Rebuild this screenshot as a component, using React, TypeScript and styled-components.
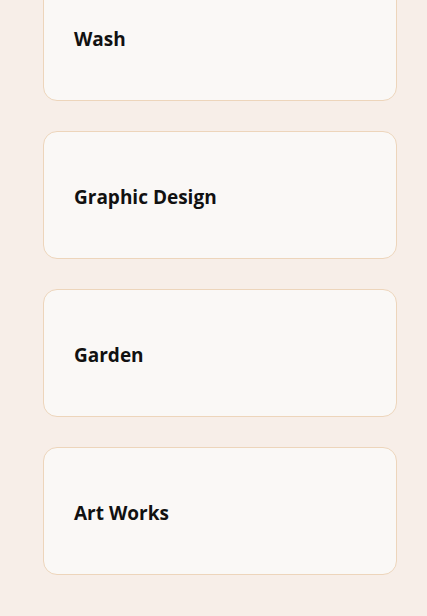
import styled, { createGlobalStyle } from 'styled-components';

const GlobalStyle = createGlobalStyle`
  html, body {
    margin: 0;
    padding: 0;
    background: #f7eee8;
    font-family: "Open Sans", "Noto Sans", sans-serif;
  }
`;

const Page = styled.div`
  height: 616px;
  overflow: hidden;
`;

const List = styled.ul`
  list-style: none;
  margin: -27px 0 0 43px;
  padding: 0;
  width: 354px;
  display: flex;
  flex-direction: column;
  gap: 30px;
`;

const Card = styled.li`
  box-sizing: border-box;
  height: 128px;
  display: flex;
  align-items: center;
  padding: 3px 30px 0;
  background: #faf8f6;
  border: 1px solid #edd5bb;
  border-radius: 14px;
`;

const Title = styled.span`
  font-size: 19px;
  font-weight: 700;
  color: #111;
`;

const services = ['Wash', 'Graphic Design', 'Garden', 'Art Works'];

function App() {
  return (
    <Page>
      <GlobalStyle />
      <List>
        {services.map((s) => (
          <Card key={s}>
            <Title>{s}</Title>
          </Card>
        ))}
      </List>
    </Page>
  );
}

export default App;
